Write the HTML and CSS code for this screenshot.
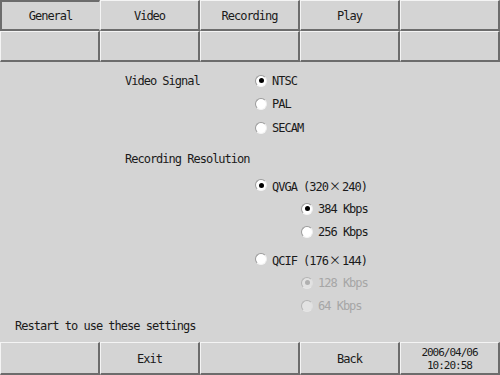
FILE: index.html
```html
<!DOCTYPE html>
<html>
<head>
<meta charset="utf-8">
<link rel="stylesheet" href="styles.css">
</head>
<body>
<div class="screen">
  <div class="tabs">
    <div class="btn selected">General</div>
    <div class="btn">Video</div>
    <div class="btn">Recording</div>
    <div class="btn">Play</div>
    <div class="btn"></div>
    <div class="btn"></div>
    <div class="btn"></div>
    <div class="btn"></div>
    <div class="btn"></div>
    <div class="btn"></div>
  </div>

  <div class="content">
    <div class="group signal">
      <div class="label">Video Signal</div>
      <div class="options">
        <div class="opt"><span class="radio on"></span><span>NTSC</span></div>
        <div class="opt"><span class="radio"></span><span>PAL</span></div>
        <div class="opt"><span class="radio"></span><span>SECAM</span></div>
      </div>
    </div>

    <div class="title">Recording Resolution</div>
    <div class="res">
      <div class="opt main first"><span class="radio on"></span><span>QVGA (320<span class="x">×</span>240)</span></div>
      <div class="opt sub"><span class="radio on"></span><span>384 Kbps</span></div>
      <div class="opt sub"><span class="radio"></span><span>256 Kbps</span></div>
      <div class="opt main second"><span class="radio"></span><span>QCIF (176<span class="x">×</span>144)</span></div>
      <div class="opt sub disabled"><span class="radio on"></span><span>128 Kbps</span></div>
      <div class="opt sub disabled"><span class="radio"></span><span>64 Kbps</span></div>
    </div>
  </div>

  <div class="status">Restart to use these settings</div>

  <div class="bottom">
    <div class="btn"></div>
    <div class="btn">Exit</div>
    <div class="btn"></div>
    <div class="btn">Back</div>
    <div class="btn clock"><span>2006/04/06</span><span>10:20:58</span></div>
  </div>
</div>
</body>
</html>
```
FILE: styles.css
```css
* { box-sizing: border-box; }
html, body { margin: 0; padding: 0; }
body {
  width: 500px;
  height: 375px;
  overflow: hidden;
  background: #d4d4d4;
  font-family: "DejaVu Sans Mono", "Liberation Mono", monospace;
  font-size: 12px;
  letter-spacing: -1px;
  color: #1a1a1a;
}
.screen {
  width: 500px;
  height: 375px;
  display: flex;
  flex-direction: column;
}
.tabs {
  display: grid;
  grid-template-columns: repeat(5, 100px);
  grid-template-rows: 31px 31px;
}
.btn {
  display: flex;
  align-items: center;
  justify-content: center;
  background: #d4d4d4;
  border-top: 1px solid #f4f4f4;
  border-left: 1px solid #f4f4f4;
  border-right: 2px solid #6c6c6c;
  border-bottom: 2px solid #6c6c6c;
  padding-top: 1px;
}
.btn.selected {
  border-top: 2px solid #6c6c6c;
  border-left: 2px solid #6c6c6c;
  border-right: 1px solid #d4d4d4;
  border-bottom: 2px solid #6c6c6c;
}
.content {
  padding-left: 125px;
  padding-top: 7px;
}
.group {
  display: flex;
}
.group .label {
  width: 130px;
  height: 24px;
  display: flex;
  align-items: center;
}
.opt {
  display: flex;
  align-items: center;
  height: 23.5px;
  gap: 5px;
}
.x {
  font-family: "Noto Sans CJK JP", sans-serif;
  font-size: 12px;
  letter-spacing: 0;
  margin: 0 1px;
}
.radio {
  width: 12px;
  height: 12px;
  border-radius: 50%;
  background: #fff;
  border: 1px solid;
  border-color: #9a9a9a #eeeeee #f4f4f4 #9a9a9a;
  position: relative;
  flex: none;
}
.radio.on::after {
  content: "";
  position: absolute;
  left: 2.5px;
  top: 2.5px;
  width: 5px;
  height: 5px;
  border-radius: 50%;
  background: #000;
}
.title {
  margin-top: 7.5px;
  height: 24px;
  display: flex;
  align-items: center;
}
.res {
  padding-left: 130px;
}
.opt.first { margin-top: 2px; height: 24px; }
.opt.second { margin-top: 3px; height: 24px; }
.opt.sub { margin-left: 46px; height: 23.5px; }
.opt.disabled { color: #a6a6a6; }
.opt.disabled .radio {
  background: #e2e2e2;
  border-color: #b4b4b4 #dedede #e6e6e6 #b4b4b4;
}
.opt.disabled .radio.on::after { background: #b0b0b0; }
.status {
  margin-top: auto;
  padding-left: 15px;
  height: 16px;
  display: flex;
  align-items: center;
  margin-bottom: 8px;
}
.bottom {
  display: grid;
  grid-template-columns: repeat(5, 100px);
  height: 33px;
}
.clock {
  flex-direction: column;
  font-size: 11px;
  line-height: 13px;
}
```
